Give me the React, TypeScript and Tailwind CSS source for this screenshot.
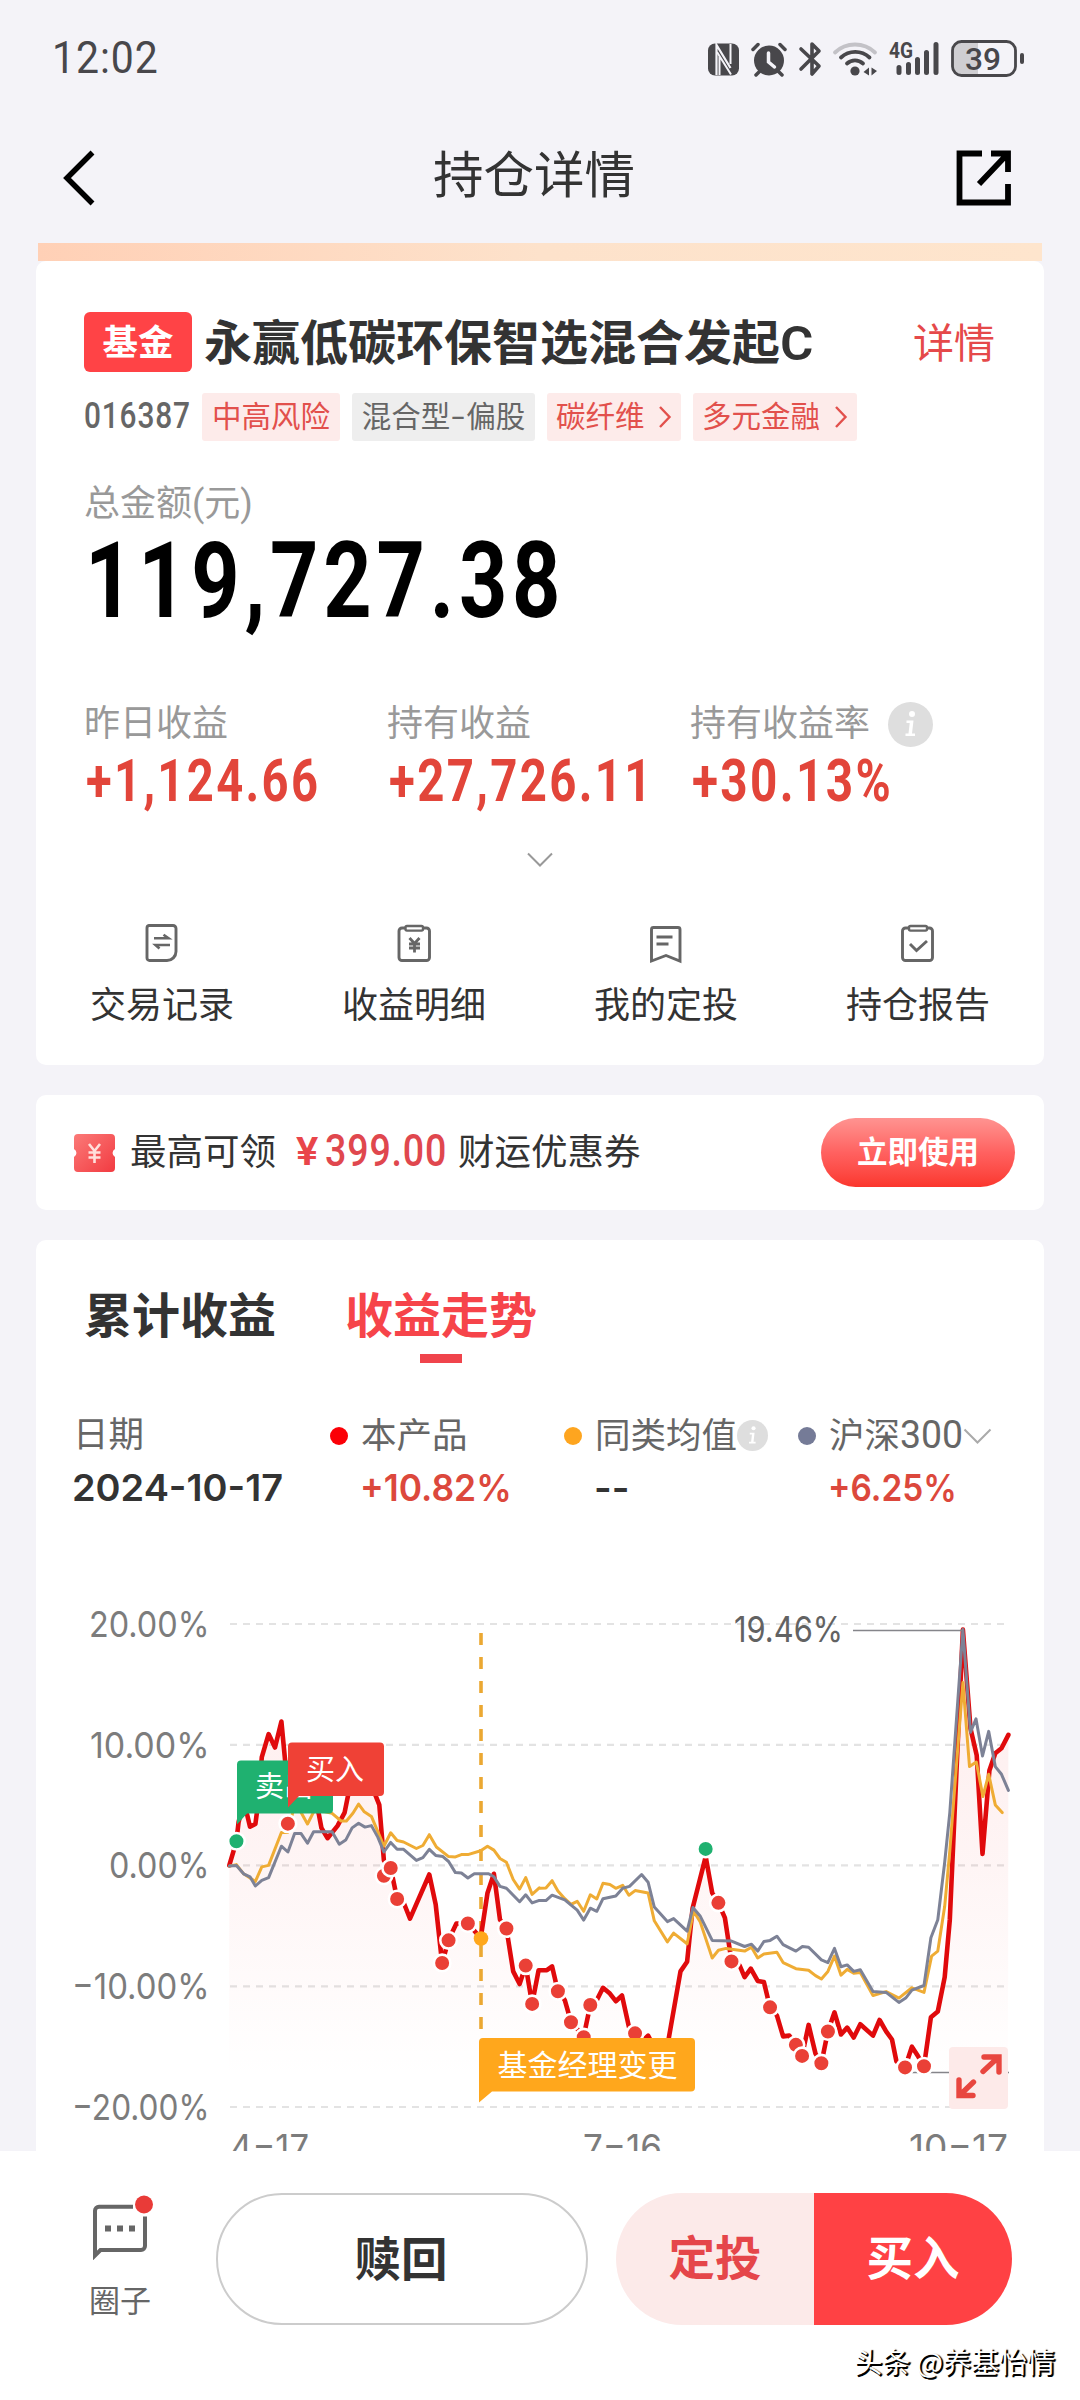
import { useLayoutEffect, useRef, useState } from "react";
import type { ReactNode } from "react";

/** Number text condensed or widened horizontally to an exact width. */
function Fit({ w, className = "", children }: { w: number; className?: string; children: ReactNode }) {
  const ref = useRef<HTMLSpanElement>(null);
  const [scale, setScale] = useState(1);
  useLayoutEffect(() => {
    if (ref.current) setScale(w / ref.current.offsetWidth);
  }, [w]);
  return (
    <span className="block shrink-0" style={{ width: w }}>
      <span
        ref={ref}
        className={`inline-block origin-left whitespace-nowrap ${className}`}
        style={{ transform: `scaleX(${scale})` }}
      >
        {children}
      </span>
    </span>
  );
}

function StatusIcons() {
  return (
    <svg width="348" height="44" viewBox="700 34 348 44" fill="none">
      {/* NFC */}
      <rect x="708" y="41.500" width="31" height="32" rx="7" fill="#48474b" />
      <path d="M716.500 73V43l14 23" stroke="#f4f3f8" strokeWidth="2.200" />
      <path d="M717 50l14 22.500M730.500 42V62M719.500 54v19" stroke="#f4f3f8" strokeWidth="2" />
      {/* alarm */}
      <circle cx="769" cy="58.500" r="15" fill="#48474b" />
      <path d="M753 47.500l5-5M785 47.500l-5-5M760 69l-4 4M778 69l4 4" stroke="#48474b" strokeWidth="3.500" strokeLinecap="round" />
      <path d="M768.500 51v9l6 5" stroke="#f4f3f8" strokeWidth="3.500" strokeLinecap="round" />
      {/* bluetooth */}
      <path d="M801 47l18 17-7 8V42l7 7-18 18" stroke="#48474b" strokeWidth="3.600" strokeLinejoin="round" strokeLinecap="round" />
      {/* wifi */}
      <path d="M835 50.500a29 29 0 0 1 40 0" stroke="#c3c2c7" strokeWidth="3.800" strokeLinecap="round" />
      <path d="M841 55.500a21 21 0 0 1 28.500 0M847 61.500a12 12 0 0 1 16 0" stroke="#48474b" strokeWidth="3.800" strokeLinecap="round" />
      <circle cx="855" cy="69" r="4.600" fill="#48474b" />
      <path d="M869 65.500v8l-5.500-3.500zM871.500 65.500v8l5.500-4.500z" fill="#48474b" />
      {/* signal */}
      <text x="889" y="56" textLength="24" lengthAdjust="spacingAndGlyphs" fontSize="22" className="font-['Roboto',sans-serif] font-bold" fill="#48474b">4G</text>
      <path d="M899 65.500v5M908.500 62.500v8M917.500 57.500v13M926.500 50.500v20M936 42.500v28" stroke="#48474b" strokeWidth="5" strokeLinecap="round" />
      {/* battery */}
      <path d="M978 40h-18a7 7 0 0 0-7 7v19a7 7 0 0 0 7 7h18z" fill="#cfced2" />
      <rect x="952.500" y="39.500" width="63" height="34" rx="9" stroke="#48474b" strokeWidth="2.800" />
      <path d="M1022 53v7" stroke="#48474b" strokeWidth="4" strokeLinecap="round" />
      <text x="965" y="68" textLength="36" lengthAdjust="spacingAndGlyphs" fontSize="32" className="font-['Roboto',sans-serif] font-medium" fill="#48474b">39</text>
    </svg>
  );
}

function Info({ size }: { size: number }) {
  return (
    <svg width={size} height={size} viewBox="0 0 45 45" className="shrink-0">
      <circle cx="22.500" cy="22.500" r="22.500" fill="#dedede" />
      <circle cx="24" cy="12" r="3" fill="#fff" />
      <path d="M18.500 18.500h7l-1.500 13h3v2.500h-9.500v-2.500h3l1.200-10.500h-3.200z" fill="#fff" />
    </svg>
  );
}

function Arrow() {
  return (
    <svg width="14" height="22" viewBox="0 0 14 22" fill="none" className="shrink-0">
      <path d="M2 1l9.500 10L2 21" stroke="#e2504c" strokeWidth="2.400" />
    </svg>
  );
}

const tools = [
  {
    label: "交易记录",
    icon: (
      <>
        <path d="M10 5.500h24a3 3 0 0 1 3 3v23a9 9 0 0 1-9 9H10.500a2.500 2.500 0 0 1-2.500-2.500v-30a2.500 2.500 0 0 1 2-2.500z" />
        <path d="M15 18.300h14.500l-5-3.500M31 25H16.500l4 3.500" strokeWidth="2.600" />
      </>
    ),
  },
  {
    label: "收益明细",
    icon: (
      <>
        <path d="M15 8h-3a3 3 0 0 0-3 3v26.500a3 3 0 0 0 3 3h24.500a3 3 0 0 0 3-3V11a3 3 0 0 0-3-3H33" transform="translate(-1 0)" />
        <rect x="14.500" y="6" width="17.500" height="4.600" rx="1.500" strokeWidth="2.400" />
        <path d="M18.500 18l5 5.500 5-5.500M23.500 23.500v9M18 24h11M18 28h11" strokeWidth="2.800" />
      </>
    ),
  },
  {
    label: "我的定投",
    icon: (
      <>
        <path d="M10.500 7.500h24.500a2 2 0 0 1 2 2V41l-14-5.500L8.500 41V9.500a2 2 0 0 1 2-2z" />
        <path d="M13.500 17h16M13.500 24h12" />
      </>
    ),
  },
  {
    label: "持仓报告",
    icon: (
      <>
        <path d="M15 8h-3a3 3 0 0 0-3 3v26.500a3 3 0 0 0 3 3h24a3 3 0 0 0 3-3V11a3 3 0 0 0-3-3H33" transform="translate(-1.500 0)" />
        <rect x="14" y="6" width="18" height="4.600" rx="1.500" strokeWidth="2.400" />
        <path d="M15 24l6.500 6.500L32 21" />
      </>
    ),
  },
];

type Pt = [number, number];
const X0 = 540;
const Y0 = 1560;
const KY = 2.6133;
const firstHalf = (pts: Pt[]): Pt[] => pts.map(([x, y]) => [x / 2.8, Y0 + y / KY]);
const secondHalf = (pts: Pt[]): Pt[] => pts.map(([x, y]) => [X0 + x / 2.9037, Y0 + y / KY]);
const join = (pts: Pt[]) => pts.map(([x, y]) => `${x.toFixed(1)},${y.toFixed(1)}`).join(" ");

const fund: Pt[] = [
  ...firstHalf([[642, 798], [662, 735], [668, 685], [680, 640], [692, 665], [700, 697], [715, 690], [722, 640], [733, 515], [752, 455], [770, 490], [788, 422], [802, 560], [806, 640], [830, 560], [870, 580], [893, 665], [900, 700], [917, 727], [945, 695], [965, 660], [980, 590], [1010, 560], [1045, 600], [1062, 640], [1075, 785], [1094, 805], [1112, 885], [1130, 895], [1148, 937], [1202, 822], [1220, 900], [1238, 1053], [1256, 993], [1278, 950], [1310, 950], [1346, 988], [1365, 870], [1383, 820], [1400, 940], [1418, 963], [1437, 1075], [1455, 1108], [1472, 1060], [1490, 1160], [1508, 1072]]),
  ...secondHalf([[20, 1072], [35, 1062], [52, 1127], [72, 1150], [90, 1207], [127, 1245], [146, 1163], [165, 1150], [183, 1118], [203, 1133], [220, 1153], [238, 1138], [258, 1220], [276, 1237], [300, 1255], [314, 1243], [330, 1270], [370, 1270], [408, 1075], [427, 1050], [443, 910], [481, 775], [500, 870], [518, 896], [537, 935], [556, 1048], [580, 1060], [594, 1090], [612, 1068], [632, 1100], [650, 1103], [668, 1170], [688, 1190], [706, 1245], [724, 1243], [743, 1267], [761, 1295], [780, 1215], [800, 1290], [817, 1315], [836, 1232], [855, 1182], [874, 1240], [892, 1222], [911, 1248], [930, 1213], [967, 1243], [986, 1202], [1005, 1232], [1022, 1253], [1035, 1310], [1060, 1326], [1080, 1272], [1098, 1297], [1115, 1323], [1135, 1195], [1155, 1180], [1175, 1090], [1190, 940], [1204, 660], [1228, 182], [1250, 440], [1268, 510], [1285, 768], [1305, 550], [1322, 505], [1340, 492], [1360, 457]]),
];

const peers: Pt[] = [
  ...firstHalf([[642, 800], [662, 796], [682, 820], [715, 840], [733, 802], [752, 798], [788, 712], [806, 712], [825, 640], [843, 660], [861, 690], [880, 655], [910, 658], [930, 662], [955, 682], [970, 682], [988, 662], [1004, 638], [1020, 658], [1040, 670], [1075, 748], [1094, 713], [1112, 733], [1130, 737], [1166, 754], [1184, 746], [1202, 718], [1222, 750], [1256, 775], [1275, 776], [1292, 770], [1310, 770], [1346, 760], [1365, 748], [1383, 758], [1400, 780], [1418, 790], [1437, 835], [1455, 860], [1472, 830], [1490, 874], [1510, 857]]),
  ...secondHalf([[0, 858], [17, 857], [35, 838], [52, 865], [72, 885], [90, 900], [108, 892], [127, 918], [146, 875], [165, 886], [183, 845], [203, 848], [220, 858], [240, 850], [258, 876], [276, 864], [314, 870], [332, 943], [370, 998], [388, 975], [427, 1003], [446, 918], [465, 945], [500, 1040], [518, 1020], [540, 1015], [594, 1022], [614, 1012], [632, 1040], [650, 1030], [688, 1025], [706, 1052], [743, 1068], [780, 1072], [800, 1086], [817, 1095], [836, 1075], [855, 1035], [874, 1085], [892, 1070], [911, 1080], [930, 1078], [967, 1138], [1005, 1128], [1042, 1145], [1080, 1118], [1115, 1130], [1137, 1035], [1155, 1022], [1175, 905], [1190, 760], [1228, 320], [1247, 540], [1267, 528], [1286, 618], [1303, 560], [1322, 640], [1342, 660]]),
];

const csi300: Pt[] = [
  ...firstHalf([[642, 800], [662, 798], [682, 820], [700, 828], [715, 852], [733, 837], [752, 830], [788, 748], [806, 763], [825, 715], [843, 715], [861, 740], [878, 710], [930, 710], [950, 743], [968, 732], [986, 700], [1004, 688], [1022, 698], [1040, 694], [1058, 725], [1075, 763], [1094, 738], [1112, 756], [1130, 756], [1166, 785], [1184, 778], [1202, 756], [1220, 772], [1240, 775], [1256, 788], [1275, 817], [1292, 818], [1310, 831], [1328, 820], [1368, 820], [1383, 828], [1400, 853], [1418, 858], [1455, 893], [1472, 875], [1490, 896], [1508, 890]]),
  ...secondHalf([[17, 890], [35, 876], [72, 888], [108, 915], [127, 941], [146, 910], [165, 918], [183, 885], [220, 878], [240, 858], [260, 853], [295, 822], [314, 842], [332, 907], [370, 945], [388, 937], [427, 970], [444, 908], [465, 930], [500, 994], [556, 996], [594, 1010], [614, 1004], [632, 1022], [650, 997], [668, 994], [688, 983], [706, 1005], [743, 1022], [762, 1010], [780, 1012], [817, 1045], [836, 1052], [855, 1015], [874, 1063], [892, 1058], [911, 1075], [930, 1071], [967, 1128], [1005, 1130], [1042, 1156], [1062, 1145], [1080, 1124], [1115, 1112], [1135, 987], [1155, 940], [1175, 790], [1190, 660], [1205, 470], [1228, 182], [1250, 450], [1266, 415], [1285, 512], [1303, 448], [1322, 540], [1340, 560], [1360, 602]]),
];

const buys: Pt[] = [
  ...firstHalf([[806, 689], [1075, 825], [1094, 805], [1112, 886], [1238, 1053], [1256, 994], [1310, 950], [1418, 963], [1472, 1060], [1490, 1160]]),
  ...secondHalf([[52, 1127], [90, 1208], [127, 1247], [146, 1163], [276, 1237], [518, 896], [556, 1049], [668, 1169], [743, 1267], [761, 1296], [817, 1315], [836, 1232], [1060, 1326], [1115, 1323]]),
];
const sells: Pt[] = [...firstHalf([[662, 735]]), ...secondHalf([[481, 755]])];

const yAxis = [
  { label: "20.00%", y: 1624, x: 91 },
  { label: "10.00%", y: 1744.8, x: 92 },
  { label: "0.00%", y: 1865.4, x: 111 },
  { label: "-10.00%", y: 1986.3, x: 74 },
  { label: "-20.00%", y: 2107, x: 74 },
];

function AxisText({ x, y, w, color = "#7c7c7c", children }: { x: number; y: number; w: number; color?: string; children: string }) {
  return (
    <text x={x} y={y} textLength={w} lengthAdjust="spacingAndGlyphs" fontSize="36" className="font-['Inter',sans-serif]" fill={color}>
      {children}
    </text>
  );
}

function Chart() {
  const area = `${join(fund)} 1008,2090 229,2090`;
  return (
    <svg width="1008" height="591" viewBox="36 1560 1008 591" fill="none" className="mt-[47px] block shrink-0">
      <defs>
        <linearGradient id="area" x1="0" y1="1630" x2="0" y2="2080" gradientUnits="userSpaceOnUse">
          <stop offset="0" stopColor="#e11" stopOpacity="0.08" />
          <stop offset="0.5" stopColor="#e11" stopOpacity="0.045" />
          <stop offset="1" stopColor="#e11" stopOpacity="0" />
        </linearGradient>
      </defs>
      {yAxis.map((a) => (
        <g key={a.label}>
          <path d={`M230 ${a.y}H1008`} stroke="#e3e3e3" strokeWidth="2.200" strokeDasharray="7 6" />
          <AxisText x={a.x - 2} y={a.y + 13} w={209.500 - a.x + 2}>{a.label.replace("-", "−")}</AxisText>
        </g>
      ))}
      <polygon points={area} fill="url(#area)" />
      <path d="M481 1633V2034" stroke="#eba832" strokeWidth="3.600" strokeDasharray="12 12" />
      <polyline points={join(fund)} stroke="#e00a0c" strokeWidth="4.600" strokeLinejoin="round" strokeLinecap="round" />
      <polyline points={join(peers)} stroke="#efac34" strokeWidth="3" strokeLinejoin="round" strokeLinecap="round" />
      <polyline points={join(csi300)} stroke="#7d8296" strokeWidth="3" strokeLinejoin="round" strokeLinecap="round" />
      <path d="M853 1630.500H963M898 2072.500H1009" stroke="#85858a" strokeWidth="1.500" />
      {buys.map(([x, y]) => (
        <circle key={`${x}`} cx={x} cy={y} r="8.300" fill="#ea4036" stroke="#fff" strokeWidth="2.600" />
      ))}
      {sells.map(([x, y]) => (
        <circle key={`${x}`} cx={x} cy={y} r="8.300" fill="#1fb170" stroke="#fff" strokeWidth="2.600" />
      ))}
      <circle cx="481" cy="1938.500" r="7.300" fill="#ffa71c" />
      <path d="M241 1760.500h88a4 4 0 0 1 4 4v45a4 4 0 0 1-4 4h-82l-10 11v-60a4 4 0 0 1 4-4z" fill="#1fb170" />
      <text x="255" y="1797" fontSize="29" className="font-['Noto_Sans_CJK_SC',sans-serif]" fill="#fff">卖出</text>
      <path d="M292 1742.500h88a4 4 0 0 1 4 4v45.500a4 4 0 0 1-4 4h-81l-11 11.500v-61a4 4 0 0 1 4-4z" fill="#ef4136" />
      <text x="306" y="1779.500" fontSize="29" className="font-['Noto_Sans_CJK_SC',sans-serif]" fill="#fff">买入</text>
      <path d="M483 2038h208a4 4 0 0 1 4 4v45.500a4 4 0 0 1-4 4H492l-13 11V2042a4 4 0 0 1 4-4z" fill="#ffa71c" />
      <text x="497.500" y="2075.500" fontSize="30" className="font-['Noto_Sans_CJK_SC',sans-serif]" fill="#fff">基金经理变更</text>
      <AxisText x={734} y={1642} w={109} color="#626262">19.46%</AxisText>
      <rect x="949" y="2047" width="59" height="62" rx="4" fill="#fdeae9" />
      <path d="M983 2071.500l15-14M984 2057h15v15M973.500 2082l-14 13.500M959 2080v15.500h14" stroke="#e8463f" strokeWidth="5.400" strokeLinecap="round" />
      <AxisText x={230} y={2159.5} w={79}>4−17</AxisText>
      <AxisText x={583} y={2159.5} w={79}>7−16</AxisText>
      <AxisText x={909} y={2159.5} w={99}>10−17</AxisText>
    </svg>
  );
}

function Dot({ className }: { className: string }) {
  return <span className={`mr-[13px] size-[18px] shrink-0 rounded-full ${className}`} />;
}

export default function App() {
  return (
    <div className="flex h-[2400px] w-[1080px] flex-col overflow-hidden bg-[#f4f3f8] font-['Roboto','Noto_Sans_CJK_SC',sans-serif] text-[#333]">
      <header className="h-[243px] shrink-0">
        <div className="flex h-[112px] items-center justify-between pt-1 pr-8 pl-[52px]">
          <Fit w={107} className="text-[44px] leading-[58px] tracking-[1px] text-[#48474b]">12:02</Fit>
          <StatusIcons />
        </div>
        <div className="mt-3 flex h-[108px] items-center justify-between pr-[68px] pl-[61px]">
          <svg width="51" height="56" viewBox="0 0 51 56" fill="none">
            <path d="M31.500 2.500L6 28l25.500 25.500" stroke="#000" strokeWidth="5.500" />
          </svg>
          <h1 className="-mt-1 text-[50.5px] leading-[60px]">持仓详情</h1>
          <svg width="56" height="56" viewBox="0 0 56 56" fill="none">
            <path d="M26 3.500H3.500v49H52V34M35 3.500h17V22M51 4.500L23 34" stroke="#000" strokeWidth="5.800" />
          </svg>
        </div>
      </header>

      <main className="flex h-[1908px] shrink-0 flex-col px-9">
        <div className="mx-0.5 h-[18px] shrink-0 bg-gradient-to-r from-[#ffd0b6] via-[#fde2cb] to-[#fee5cd]" />

        <section className="flex h-[804px] shrink-0 flex-col rounded-[10px] bg-white pt-[51px]">
          <div className="flex h-[60px] items-center pr-[49px] pl-12">
            <span className="flex h-[60px] w-[108px] items-center justify-center rounded-md bg-[#ff4346] pt-[2px] text-[35.5px] leading-[60px] font-bold text-white">基金</span>
            <h2 className="mt-[3px] ml-[12px] flex text-[48px] leading-[60px] font-bold whitespace-nowrap">永赢低碳环保智选混合发起<Fit w={33} className="font-semibold">C</Fit></h2>
            <a className="mt-[3px] ml-auto text-[41px] leading-[60px] text-[#e5494a]">详情</a>
          </div>
          <div className="mt-[21px] flex h-12 items-center pl-12 text-[29.5px] leading-[48px] whitespace-nowrap">
            <Fit w={107} className="text-[36px] font-medium tracking-[1px] text-[#666]">016387</Fit>
            <span className="ml-[11px] h-12 w-[138px] rounded-[3px] bg-[#fdebea] text-center text-[#e2504c]">中高风险</span>
            <span className="ml-3 h-12 w-[183px] rounded-[3px] bg-[#eee] text-center text-[#666]">混合型<span className="mx-[4px] inline-block scale-x-160">-</span>偏股</span>
            <span className="ml-3 flex h-12 w-[134px] items-center justify-between rounded-[3px] bg-[#fdebea] pr-[9px] pl-[9px] text-[#e2504c]">碳纤维<Arrow /></span>
            <span className="ml-3 flex h-12 w-[164px] items-center justify-between rounded-[3px] bg-[#fdebea] pr-[9px] pl-[9px] text-[#e2504c]">多元金融<Arrow /></span>
          </div>
          <p className="mt-[38px] h-[50px] pl-12 text-[36px] leading-[50px] text-[#999]">总金额(元)</p>
          <div className="h-[101px] pt-[2px] pl-[49px]">
            <Fit w={480} className="text-[106px] leading-[100px] font-bold tracking-[6px] text-black">119,727.38</Fit>
          </div>
          <div className="mt-[70px] grid grid-cols-[303px_303px_1fr] pl-12 text-[36px] leading-[48px] text-[#999]">
            <span>昨日收益</span>
            <span>持有收益</span>
            <span className="flex items-center gap-[18px]">持有收益率<Info size={45} /></span>
          </div>
          <div className="mt-[3px] grid grid-cols-[303px_303px_1fr] pl-[50px] text-[60px] leading-[60px] font-bold tracking-[3px] text-[#e2453a]">
            <Fit w={234}>+1,124.66</Fit>
            <Fit w={265}>+27,726.11</Fit>
            <Fit w={201}>+30.13%</Fit>
          </div>
          <svg width="26" height="15" viewBox="0 0 26 15" fill="none" className="mt-[41px] shrink-0 self-center">
            <path d="M1 1.500l12 12 12-12" stroke="#999" strokeWidth="2" />
          </svg>
          <div className="mt-[53px] grid grid-cols-4">
            {tools.map((t) => (
              <div key={t.label} className="flex flex-col items-center">
                <svg width="46" height="46" viewBox="0 0 46 46" fill="none" stroke="#666" strokeWidth="2.900">{t.icon}</svg>
                <span className="mt-[15px] text-[36px] leading-[50px]">{t.label}</span>
              </div>
            ))}
          </div>
        </section>

        <section className="mt-[30px] flex h-[115px] shrink-0 items-center rounded-[10px] bg-white pr-[29px] pl-[38px] text-[36.5px] leading-[50px] whitespace-nowrap">
          <svg width="41" height="38" viewBox="0 0 41 38" fill="none">
            <defs>
              <linearGradient id="coupon" x1="0" y1="0" x2="1" y2="1">
                <stop offset="0" stopColor="#fb7a78" />
                <stop offset="1" stopColor="#f23b41" />
              </linearGradient>
            </defs>
            <path d="M4 0h33a4 4 0 0 1 4 4v11a4.500 4.500 0 0 0 0 8v11a4 4 0 0 1-4 4H4a4 4 0 0 1-4-4V23a4.500 4.500 0 0 0 0-8V4a4 4 0 0 1 4-4z" fill="url(#coupon)" />
            <path d="M15 10l5.500 7 5.500-7M20.500 17v12M14.500 18.500h12M14.500 23.500h12" stroke="#ffe0dc" strokeWidth="2.600" />
          </svg>
          <span className="ml-[15px]">最高可领</span>
          <span className="ml-[20px]"><Fit w={22} className="text-[38px] font-semibold text-[#e9454a]">¥</Fit></span>
          <span className="ml-[7px]"><Fit w={122} className="text-[44px] font-medium tracking-[1px] text-[#e0474e]">399.00</Fit></span>
          <span className="ml-[11px]">财运优惠券</span>
          <button className="ml-auto h-[69px] w-[194px] rounded-full bg-gradient-to-b from-[#ff9391] via-[#ff6160] to-[#fb352c] text-[30.5px] leading-[67px] font-bold text-white">立即使用</button>
        </section>

        <section className="mt-[30px] flex h-[911px] shrink-0 flex-col rounded-t-[10px] bg-white pt-[47px]">
          <div className="flex gap-[69px] pl-12 text-[48px] leading-[60px] font-bold">
            <span>累计收益</span>
            <span className="flex flex-col items-center text-[#f6444a]">
              收益走势
              <span className="mt-[7px] h-[9px] w-[42px] bg-[#f0444c]" />
            </span>
          </div>
          <div className="mt-[47px] grid grid-cols-[257px_234px_234px_1fr] pl-[37px] text-[35.5px] leading-[50px] whitespace-nowrap text-[#666]">
            <span>日期</span>
            <span className="flex items-center"><Dot className="bg-[#fb0007]" />本产品</span>
            <span className="flex items-center"><Dot className="bg-[#fea51f]" />同类均值<Info size={31} /></span>
            <span className="flex items-center">
              <Dot className="bg-[#757b97]" />沪深<Fit w={63} className="text-[38px]">300</Fit>
              <svg width="29" height="16" viewBox="0 0 29 16" fill="none">
                <path d="M1.500 1.500l13 13 13-13" stroke="#aaa" strokeWidth="2" />
              </svg>
            </span>
          </div>
          <div className="mt-[1px] grid h-[51px] grid-cols-[288px_234px_234px_1fr] pl-[36px] font-['Inter'] text-[37px] leading-[52px] font-semibold">
            <Fit w={211}>2024-10-17</Fit>
            <Fit w={152} className="text-[#dc483c]">+10.82%</Fit>
            <Fit w={35}>--</Fit>
            <Fit w={129} className="text-[#dc483c]">+6.25%</Fit>
          </div>
          <Chart />
        </section>
      </main>

      <footer className="h-[249px] shrink-0 bg-white pt-[42px]">
        <div className="flex h-[132px] items-center pr-[68px] pl-[88px]">
          <div className="flex w-[64px] flex-col items-center">
            <svg width="66" height="66" viewBox="87 2197.500 66 66" fill="none">
              <path d="M133 2210.200H99a4 4 0 0 0-4 4V2259l5.500-5.500H141a4 4 0 0 0 4-4V2220" stroke="#666" strokeWidth="4" />
              <path d="M105 2229h6v6h-6zM117 2229h6v6h-6zM129 2229h6v6h-6z" fill="#666" />
              <circle cx="144" cy="2208" r="9" fill="#e93b38" />
            </svg>
            <span className="mt-[20px] text-[31px] leading-[44px] text-[#666]">圈子</span>
          </div>
          <button className="ml-[64px] h-[132px] w-[372px] rounded-full border-2 border-[#ccc] pt-[2px] pr-[2px] text-[46.5px] leading-[126px] font-bold">赎回</button>
          <div className="ml-[28px] flex h-[132px] w-[396px] overflow-hidden rounded-full text-[46.5px] leading-[132px] font-bold">
            <button className="w-[198px] bg-[#fceae9] text-[#e5464a]">定投</button>
            <button className="w-[198px] bg-[#ff4144] text-white">买入</button>
          </div>
        </div>
        <p className="mt-[16px] pr-[25px] text-right font-['Noto_Sans_CJK_SC'] text-[28px] leading-[40px] whitespace-nowrap text-white [text-shadow:1.5px_1.5px_0_#000,2px_1px_1px_#000]">头条 @养基怡情</p>
      </footer>
    </div>
  );
}
